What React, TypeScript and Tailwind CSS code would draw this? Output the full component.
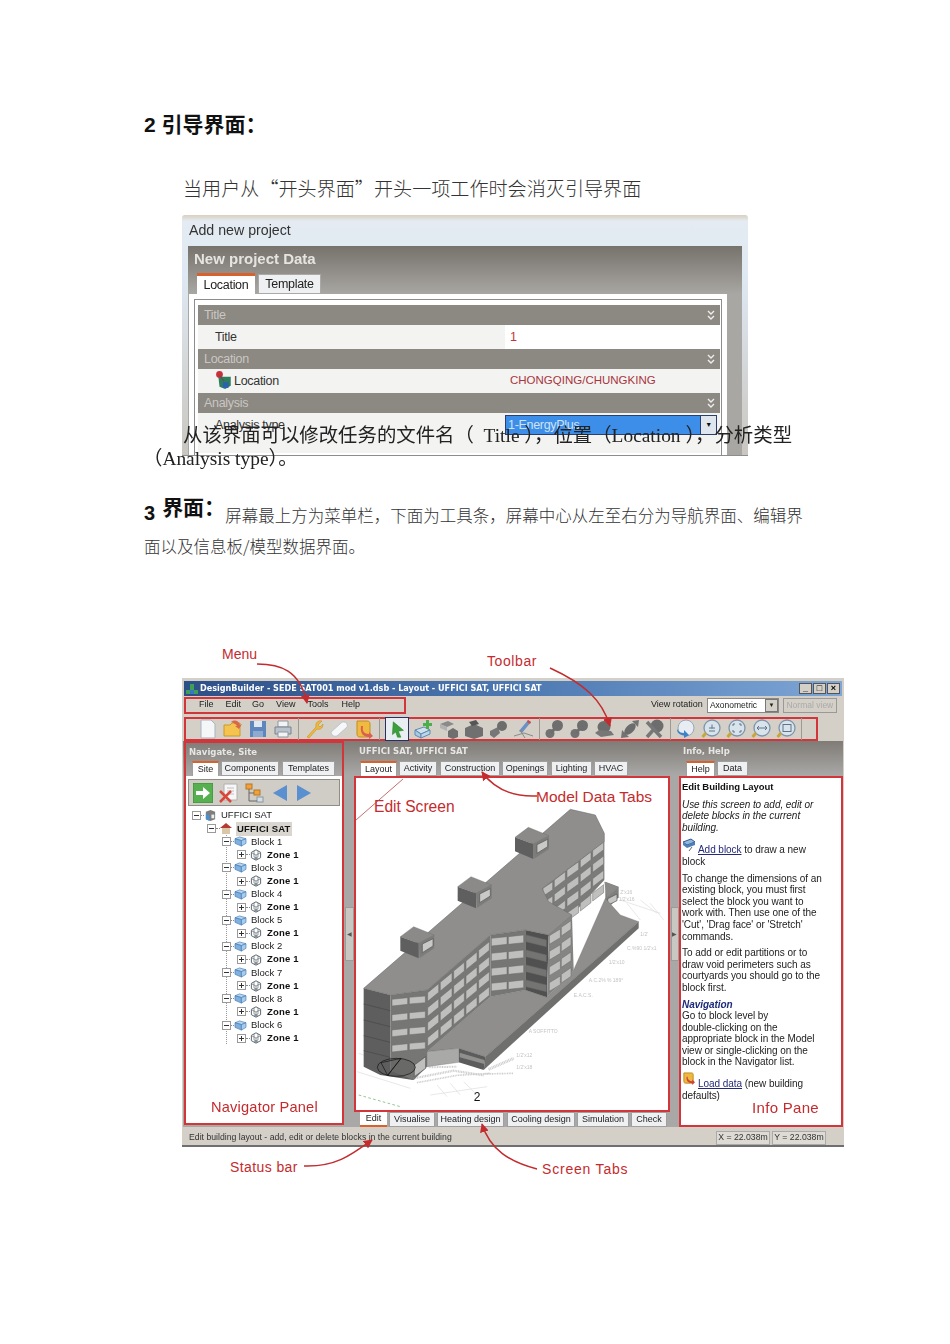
import type { ReactNode } from "react";

const serif = "font-['Liberation_Serif','Noto_Sans_CJK_SC',serif]";
const arial = "font-['Liberation_Sans',sans-serif]";

/* ---------- small icons ---------- */
const Ico = ({ children, className = "" }: { children: ReactNode; className?: string }) => (
  <svg viewBox="0 0 20 20" className={"w-5 h-5 shrink-0 " + className}>{children}</svg>
);

const Ball = () => (
  <Ico>
    <circle cx="12.5" cy="6.5" r="5.5" fill="#6e6e6e" />
    <circle cx="5" cy="14.5" r="4.5" fill="#727272" />
    <path d="M6 14 L12 7" stroke="#6e6e6e" strokeWidth="3" />
  </Ico>
);

const Zoom = ({ children }: { children: ReactNode }) => (
  <Ico>
    <circle cx="11" cy="9" r="8" fill="#d8e3ec" stroke="#7f94a8" strokeWidth="1.3" />
    <path d="M5 14 L1.5 18" stroke="#c9a63a" strokeWidth="3" />
    {children}
  </Ico>
);

const ToolSep = () => <div className="w-px h-[22px] bg-[#9d9a93] shrink-0" />;

const MainToolbar = () => (
  <div className="flex items-center gap-[5px] pl-[12px] h-full">
    <Ico><path d="M3 1h10l4 4v14H3z" fill="#f4f6f8" stroke="#a9b4bf" /></Ico>
    <Ico><path d="M1 6h6l2-2h8v13H1z" fill="#f5c450" stroke="#c99a2a" /><path d="M8 3c4-3 8-1 9 3l2-1-3 5-4-3 2 0c-1-2-3-3-6-4z" fill="#d9684a" /></Ico>
    <Ico><path d="M2 2h16v16H2z" fill="#5f86bd" /><path d="M6 2h8v6H6z" fill="#dfe8f2" /><path d="M5 12h10v6H5z" fill="#8eaad0" /></Ico>
    <Ico><path d="M5 2h10v6H5z" fill="#f3f3f3" stroke="#8e97a0" /><path d="M2 8h16v7H2z" fill="#b9c3cc" stroke="#77838f" /><path d="M5 13h10v5H5z" fill="#f3f3f3" stroke="#8e97a0" /></Ico>
    <ToolSep />
    <Ico><path d="M3 18 L12 8 C11 4 14 1 18 2 L14 6 L16 8 L19 5 C19 10 15 11 13 10 L5 19z" fill="#eeb83e" stroke="#c4922a" strokeWidth=".6" /></Ico>
    <Ico><path d="M2 13 L12 4 C14 2 17 3 18 5 C19 7 18 8 17 9 L8 17 C5 18 2 16 2 13z" fill="#f5f7f9" stroke="#bcc4cc" /></Ico>
    <Ico><path d="M3 2h10c2 0 3 1 3 3v13H6c-2 0-3-1-3-3z" fill="#f0b93f" stroke="#c48d22" /><path d="M9 7c-1 5 1 8 6 8l0-2 4 4-4 3 0-2c-6 0-9-4-8-11z" fill="#d9604f" /></Ico>
    <ToolSep />
    <div className="w-6 h-6 border border-[#2c2f66] bg-[#e9eef2] flex items-center justify-center shrink-0">
      <Ico className="!w-[17px] !h-[17px]"><path d="M5 1 L17 11 L11 12 L14 19 L10 19 L8 13 L4 16z" fill="#3ba03b" stroke="#1f7a1f" strokeWidth=".6" /></Ico>
    </div>
    <Ico><path d="M1 11l9-3 6 3-9 4z" fill="#cfe0ee" stroke="#5f8bb0" /><path d="M1 11v5l6 3v-4z" fill="#a9c8e2" stroke="#5f8bb0" /><path d="M7 15v4l9-4v-4z" fill="#bcd6ea" stroke="#5f8bb0" /><path d="M12 1h3v3h3v3h-3v3h-3V7H9V4h3z" fill="#4caf4c" /></Ico>
    <Ico><path d="M1 5l8-3 6 3-7 3z" fill="#8a8a8a" /><path d="M1 5v4l7 3V8z" fill="#b2b2b2" /><path d="M9 12l5-3 5 3v6l-5 2-5-2z" fill="#6f6f6f" /></Ico>
    <Ico><path d="M1 9l9-4 9 4v8l-9 3-9-3z" fill="#707070" /><path d="M5 3l7-2 3 4-7 2z" fill="#565656" /></Ico>
    <Ico><path d="M1 12l8-4 2 6-6 5-4-3z" fill="#777" /><circle cx="13" cy="7" r="5" fill="#6d6d6d" /></Ico>
    <Ico><path d="M14 1l3 2-9 11-3-2z" fill="#6d8fc4" /><path d="M0 17 L10 14 L19 17 M6 11 L11 19" stroke="#8a8a86" fill="none" /><path d="M14 1l3 2-1 2-3-2z" fill="#d24a3c" /></Ico>
    <ToolSep />
    <Ball />
    <Ball />
    <Ico><ellipse cx="9" cy="8" rx="6.5" ry="6" fill="#6c6c6c" /><path d="M0 14l4-3 12 1 3 4-13 2z" fill="#777" /></Ico>
    <Ico><path d="M1 19 L2 11 L9 18z M12 2 L19 1 L18 8z" fill="#737373" /><ellipse cx="10" cy="10" rx="7" ry="4" transform="rotate(-45 10 10)" fill="#6c6c6c" /></Ico>
    <Ico><circle cx="12" cy="7" r="6.5" fill="#6d6d6d" /><path d="M2 3 L16 18 M2 18 L10 9" stroke="#777" strokeWidth="3.5" /></Ico>
    <ToolSep />
    <Ico><circle cx="10" cy="9" r="8" fill="#e7edf2" stroke="#9aa7b2" /><path d="M1 10c2 3 4 4 7 4v-3l5 5-5 3v-3c-4 0-7-2-7-6z" fill="#3c83c9" /></Ico>
    <Zoom><path d="M8 9h6M11 5.5v4M8 12h6" stroke="#5f7488" fill="none" /></Zoom>
    <Zoom><path d="M7 5h2M13 5h2M7 13h2M13 13h2M7 5v2M15 5v2M7 11v2M15 11v2" stroke="#5f7488" fill="none" /></Zoom>
    <Zoom><path d="M6 9h10M6 9l2-2M6 9l2 2M16 9l-2-2M16 9l-2 2" stroke="#5f7488" fill="none" /></Zoom>
    <Zoom><rect x="7" y="5.5" width="8" height="7" fill="none" stroke="#5f7488" /></Zoom>
    <ToolSep />
  </div>
);

const BlockIco = () => (
  <svg viewBox="0 0 14 12" className="w-[13px] h-[11px] shrink-0">
    <path d="M1 3l5-2 7 2-5 2z" fill="#b8d4ee" stroke="#3f78b4" strokeWidth=".7" />
    <path d="M1 3v5l7 3V5z" fill="#7fb0de" stroke="#3f78b4" strokeWidth=".7" />
    <path d="M8 5v6l5-3V3z" fill="#a8ccec" stroke="#3f78b4" strokeWidth=".7" />
  </svg>
);

const ZoneIco = () => (
  <svg viewBox="0 0 12 12" className="w-3 h-3 shrink-0" fill="none" stroke="#4f5a63" strokeWidth=".9">
    <path d="M6 .8l4.6 2.5v5.4L6 11.2 1.4 8.7V3.3z" />
    <path d="M2 4l4 2 4-2M6 6v5M4 2l0 6 4 2M8 2v6L4 10" strokeWidth=".6" />
  </svg>
);

const Expander = ({ plus }: { plus?: boolean }) => (
  <span className="relative w-[9px] h-[9px] border border-[#9a9a9a] bg-white shrink-0 flex items-center justify-center">
    <span className="w-[5px] h-px bg-[#333]" />
    {plus && <span className="absolute w-px h-[5px] bg-[#333]" />}
  </span>
);

const Dots = ({ className = "w-[3px]" }: { className?: string }) => (
  <span className={"border-t border-dotted border-[#888] shrink-0 " + className} />
);

const BlockNode = ({ n }: { n: number }) => (
  <>
    <div className="h-[13.1px] flex items-center -ml-[5px]">
      <Expander />
      <Dots />
      <BlockIco />
      <span className="ml-[4px] text-[9.5px] text-[#222]">Block {n}</span>
    </div>
    <div className="h-[13.1px] flex items-center ml-[10px]">
      <Expander plus />
      <Dots className="w-[4px]" />
      <ZoneIco />
      <span className="ml-[5px] text-[9.5px] font-bold text-[#111] tracking-[.2px]">Zone 1</span>
    </div>
  </>
);

const Tab = ({ label, active, className = "" }: { label: string; active?: boolean; className?: string }) => (
  <div
    className={
      "h-[15px] flex items-center justify-center text-[9px] text-[#222] border border-[#9f9f9f] " +
      (active ? "bg-white border-t-2 border-t-[#d8612c] border-b-0 " : "bg-[#eef0f2] ") +
      className
    }
  >
    {label}
  </div>
);

/* ---------- the 3D model ---------- */
type Win = [number, number, number, number];

const windowsOf = (list: Win[], h: number, floors: number, step: number, fill = "#bfbfbd") =>
  list.flatMap((w, i) =>
    Array.from({ length: floors }, (_, f) => {
      const d = f * step;
      return (
        <polygon
          key={i + "-" + f}
          points={`${w[0]},${w[1] + d} ${w[2]},${w[3] + d} ${w[2]},${w[3] + d + h} ${w[0]},${w[1] + d + h}`}
          fill={fill}
          stroke="#6a6a6a"
          strokeWidth="1.5"
        />
      );
    })
  );

const Dormer = ({ x, y }: { x: number; y: number }) => (
  <g transform={`translate(${x} ${y})`}>
    <polygon points="130,410 185,430 185,475 130,452" fill="#5f5f5f" />
    <polygon points="130,410 170,380 232,405 185,430" fill="#8b8a88" stroke="#666" />
    <polygon points="185,430 232,405 232,445 188,474" fill="#7c7c7a" />
    <polygon points="196,432 228,416 228,438 196,458" fill="#c9c9c7" stroke="#555" strokeWidth="2" />
  </g>
);

const Building = () => (
  <svg viewBox="0 0 930 930" className="w-[310px] h-[310px] block">
    <g stroke="#dcdcdc" fill="none" strokeWidth="2">
      <path d="M0 815l160 50 M5 760l150 50 M220 885l170-25 M240 855l30 35 M280 850l30 35 M320 845l35 35" />
      <path d="M790 300l120 40 M810 310l40 50 M850 300l50 40 M880 310l40 50" />
    </g>
    <path d="M5 885 L130 920" stroke="#5fa85f" strokeWidth="2" strokeDasharray="8 7" fill="none" />

    {/* speckle of the site drawing around the base */}
    <g stroke="#cdcdcd" fill="none" strokeWidth="7" strokeDasharray="3 2">
      <path d="M170 835 L290 812 L380 826" />
      <path d="M180 848 L300 826 L400 820" strokeWidth="5" />
      <path d="M215 802 L300 800" strokeWidth="6" />
      <path d="M395 808 L470 775" strokeWidth="9" />
      <path d="M380 822 L470 820" strokeWidth="5" />
    </g>

    {/* upper block behind and small roof box */}
    <polygon points="745,245 785,260 785,292 755,322 745,300" fill="#7f7f7d" />
    <polygon points="752,296 780,282 780,302 752,316" fill="#c6c6c4" stroke="#555" strokeWidth="2" />
    <polygon points="742,245 785,262 750,292" fill="#8a8987" />

    {/* podium */}
    <polygon points="745,295 790,345 845,365 385,770 305,745 210,755 400,590 505,570 570,592 650,510" fill="#8f8e8c" stroke="#666" />
    <polygon points="845,365 845,385 380,810 385,770" fill="#6f6f6d" />
    <polygon points="305,745 385,770 380,810 305,787" fill="#5c5c5c" />
    <polygon points="308,758 382,780 382,792 308,772" fill="#8f8f8d" />
    <polygon points="210,755 305,745 305,787 210,800" fill="#a9a9a7" stroke="#666" />

    {/* upper facade */}
    <polygon points="555,265 742,125 742,240 645,345 575,325" fill="#7b7b79" />
    {windowsOf(
      [
        [558, 265, 587, 245],
        [592, 240, 625, 215],
        [630, 210, 665, 185],
        [670, 180, 702, 155],
        [707, 150, 740, 125],
      ],
      24, 4, 43
    )}

    {/* facades */}
    <polygon points="20,565 100,585 100,812 172,825 168,840 70,825 20,800" fill="#5e5e5e" />
    <path d="M20 612l80 20M20 660l80 20M20 707l80 20M20 752l80 20" stroke="#474747" strokeWidth="2" />
    <polygon points="100,585 210,570 210,800 170,840 100,812" fill="#767674" />
    <polygon points="210,570 400,405 400,590 210,755" fill="#777775" />
    <polygon points="400,405 505,390 505,570 400,590" fill="#767674" />
    <polygon points="505,390 575,405 570,592 505,570" fill="#505050" />
    <polygon points="575,405 645,345 650,510 570,592" fill="#858583" />
    {windowsOf([[105, 598, 152, 593], [157, 592, 205, 588]], 20, 4, 46)}
    <polygon points="172,795 206,770 206,805 172,830" fill="#bfbfbd" stroke="#555" strokeWidth="2" />
    {windowsOf(
      [
        [212, 578, 245, 551],
        [250, 547, 285, 518],
        [290, 513, 322, 487],
        [327, 483, 360, 456],
        [365, 451, 397, 425],
      ],
      26, 4, 45
    )}
    {windowsOf([[403, 415, 450, 410], [454, 410, 500, 405]], 23, 4, 45)}
    {windowsOf([[507, 405, 568, 420]], 20, 4, 45, "#747472")}
    {windowsOf([[577, 407, 610, 387], [613, 382, 642, 362]], 26, 4, 47)}

    {/* roof */}
    <polygon
      points="20,565 640,28 715,45 742,100 742,125 555,265 575,305 645,345 575,405 505,390 400,405 210,570 100,585"
      fill="#8f8e8c"
      stroke="#666"
      strokeWidth="1.5"
    />
    <Dormer x={0} y={0} />
    <Dormer x={172} y={-150} />
    <Dormer x={344} y={-298} />

    {/* north arrow */}
    <ellipse cx="118" cy="802" rx="57" ry="27" fill="#5e5e5e" fillOpacity=".55" stroke="#111" strokeWidth="2" />
    <path d="M72 788 L132 775 L92 826z M132 775 L92 826" fill="none" stroke="#111" strokeWidth="2" />

    {/* drawing labels */}
    <g fill="#c4c4c4" fontFamily="Liberation Sans, sans-serif" fontSize="15">
      <text x="790" y="283">Z'x16</text>
      <text x="785" y="303">1/2'x16</text>
      <text x="850" y="408">1/2'</text>
      <text x="810" y="450">C.%90 1/2'x1</text>
      <text x="755" y="492">1/2'x10</text>
      <text x="695" y="547">A.C.2% % 189°</text>
      <text x="650" y="590">E.A.C.S.</text>
      <text x="515" y="700">A SOFFITTO</text>
      <text x="478" y="772">1/2'x12</text>
      <text x="478" y="808">1/2'x18</text>
    </g>
    <text x="350" y="902" fontFamily="Liberation Sans, sans-serif" fontSize="36" fill="#111">2</text>
  </svg>
);

const Note = ({ className, children }: { className: string; children: ReactNode }) => (
  <div className={"absolute text-[#c42b2e] leading-none whitespace-nowrap " + arial + " " + className}>{children}</div>
);

const Line = ({ children, className = "" }: { children: ReactNode; className?: string }) => (
  <div className={"h-[11.6px] leading-[11.6px] " + className}>{children}</div>
);

const SectionBar = ({ label }: { label: string }) => (
  <div className="h-5 bg-[#8c8882] flex items-center justify-between pl-[6px] pr-[5px] text-[12.5px] text-[#c9c7c3]">
    <span>{label}</span>
    <svg viewBox="0 0 8 10" className="w-2 h-[10px]" fill="none" stroke="#eee" strokeWidth="1.4">
      <path d="M1 1l3 3 3-3M1 6l3 3 3-3" />
    </svg>
  </div>
);

export default function App() {
  return (
    <div className="relative w-[950px] h-[1344px] overflow-hidden bg-white text-[#222]">
      <div className="pl-[144px] pt-[112px]">
        <h2 className="h-[26px] leading-[26px] text-[21px] font-bold text-[#111] font-['Liberation_Sans','Noto_Sans_CJK_SC',sans-serif]">
          2 引导界面：
        </h2>
        <p className="mt-[38px] ml-[39px] h-6 leading-6 text-[19.1px] text-[#333] font-['Noto_Sans_CJK_SC',sans-serif] font-light whitespace-nowrap">
          当用户从“开头界面”开头一项工作时会消灭引导界面
        </p>

        {/* Add new project dialog */}
        <div className={"mt-[15px] ml-[38px] w-[566px] h-[241px] rounded-t-[3px] overflow-hidden flex flex-col px-[6px] border-b border-[#8d8d8d] blur-[0.35px] bg-[linear-gradient(180deg,#d9cfbf_0px,#e4ebf2_6px,#dfe9f3_60px,#c9c6bf_100%)] " + arial}>
          <div className="h-[31px] shrink-0 flex items-center pl-[1px] pt-[1px] text-[14.2px] text-[#333]">Add new project</div>
          <div className="flex-1 min-h-0 flex flex-col bg-[linear-gradient(180deg,#76726c_0px,#a9a7a3_48px,#a9a7a3_100%)]">
            <div className="h-[27px] shrink-0 flex items-center pl-[6px] text-[15px] font-bold text-[#e6e4e0]">New project Data</div>
            <div className="flex h-[21px] shrink-0 items-end pl-[9px] gap-[3px] text-[12.5px] tracking-[-.3px]">
              <div className="w-[58px] h-[21px] bg-white border-t-[3px] border-[#d9612b] flex items-center justify-center">Location</div>
              <div className="w-[63px] h-5 bg-[#eef0f2] border border-[#a9a9a9] flex items-center justify-center">Template</div>
            </div>
            <div className="flex-1 min-h-0 w-[538px] ml-[1px] bg-white pt-[5px] px-[5px] overflow-hidden">
              <div className="h-full border-x border-t border-[#8d8d8d] pl-[3px] pr-[1px] pt-[5px] text-[12.5px] tracking-[-.3px] text-[#333]">
                <SectionBar label="Title" />
                <div className="h-[24px] flex bg-[#f3f3f1]">
                  <div className="w-[307px] pl-[17px] flex items-center">Title</div>
                  <div className="flex-1 bg-white flex items-center pl-[5px] text-[#c2353a]">1</div>
                </div>
                <SectionBar label="Location" />
                <div className="h-[24px] flex bg-[#f3f3f1]">
                  <div className="w-[312px] pl-[17px] flex items-center">
                    <svg viewBox="0 0 16 16" className="w-[18px] h-[18px] shrink-0 -mt-[2px]">
                      <path d="M3 5h11v8l-5 3-5-2z" fill="#2f7f5f" />
                      <path d="M7 10h5v5H7z" fill="#2a62b0" />
                      <circle cx="4" cy="3" r="3" fill="#c9303a" />
                      <path d="M4 4l4 5" stroke="#555" />
                    </svg>
                    <span className="ml-[1px]">Location</span>
                  </div>
                  <div className="flex-1 flex items-center text-[11.5px] tracking-[0] text-[#a8353e]">CHONGQING/CHUNGKING</div>
                </div>
                <SectionBar label="Analysis" />
                <div className="relative h-10 bg-[#f3f3f1] pl-[17px] pt-[3px]">
                  Analysis type
                  <div className="absolute left-[307px] top-[2px] w-[212px] h-5 flex border border-[#2a3f6b]">
                    <div className="flex-1 bg-[#3d8ee8] text-[#cfe2f6] pl-[2px] flex items-center">1-EnergyPlus</div>
                    <div className="w-4 bg-[#dfe6ee] flex items-center justify-center text-[7px] text-[#111] border-l border-[#2a3f6b]">▼</div>
                  </div>
                </div>
              </div>
            </div>
          </div>
        </div>

        {/* runs over the dialog */}
        <div className={"relative -mt-[32px] text-[19.4px] text-[#222] whitespace-nowrap " + serif}>
          <p className="ml-[39px] h-6 leading-6">从该界面可以修改任务的文件名（{"\u00a0\u00a0"}Title{"\u00a0"}），位置（Location{"\u00a0"}），分析类型</p>
          <p className="-ml-[1px] -mt-[1px] h-6 leading-6">（Analysis type）。</p>
        </div>

        <div className="mt-[24px] flex items-start whitespace-nowrap font-['Liberation_Sans','Noto_Sans_CJK_SC',sans-serif] h-[32px]">
          <span className="mt-[5px] text-[20px] leading-[26px] font-bold text-[#111]">3</span>
          <span className="ml-[7px] text-[21px] leading-[26px] font-bold text-[#111]">界面：</span>
          <span className="mt-[9px] text-[16.5px] leading-6 text-[#333] font-light">屏幕最上方为菜单栏，下面为工具条，屏幕中心从左至右分为导航界面、编辑界</span>
        </div>
        <p className="mt-[7px] h-6 leading-6 text-[16.5px] text-[#333] font-light font-['Noto_Sans_CJK_SC',sans-serif] whitespace-nowrap">
          面以及信息板/模型数据界面。
        </p>

        {/* DesignBuilder window */}
        <div className={"mt-[120px] ml-[38px] w-[662px] h-[469px] flex flex-col bg-[#d4d0c8] pt-[3px] px-[2px] border-b-2 border-[#6f6f6f] blur-[0.35px] " + arial}>
          <div className="h-[15px] shrink-0 flex items-center bg-[linear-gradient(90deg,#2d4f87,#4c78b1_50%,#7ea6d6)] pr-[2px]">
            <svg viewBox="0 0 14 12" className="w-[14px] h-3 shrink-0 ml-[1px]">
              <path d="M1 11V7h4V1h4v6h4v4z" fill="#3f9f57" />
              <path d="M5 7h4v4H5z" fill="#3577c6" />
            </svg>
            <span className="ml-[1px] text-[8.1px] font-bold text-white whitespace-nowrap font-['DejaVu_Sans',sans-serif]">
              DesignBuilder - SEDE SAT001 mod v1.dsb - Layout - UFFICI SAT, UFFICI SAT
            </span>
            <div className="ml-auto flex gap-px">
              {["_", "□", "×"].map((c) => (
                <div key={c} className="w-[13px] h-[11px] bg-[#d4d0c8] border border-[#555] text-[9px] leading-[9px] font-bold text-black text-center">{c}</div>
              ))}
            </div>
          </div>
          <div className="h-[18px] shrink-0 flex items-center text-[9px]">
            <div className="w-[222px] h-[17px] border-2 border-[#d2353a] flex items-center relative">
              <span className="ml-[13px]">File</span>
              <span className="ml-[12px]">Edit</span>
              <span className="ml-[11px]">Go</span>
              <span className="ml-[12px]">View</span>
              <span className="ml-[12px]">Tools</span>
              <span className="ml-[13px]">Help</span>
            </div>
            <span className="ml-[245px]">View rotation</span>
            <div className="ml-[4px] w-[72px] h-[15px] bg-white border border-[#888] flex items-center justify-between pl-[2px] text-[8.5px]">
              Axonometric
              <span className="w-[13px] h-[13px] bg-[#d4d0c8] border border-[#777] text-[6px] text-center leading-[11px]">▼</span>
            </div>
            <div className="ml-[4px] w-[54px] h-[15px] border border-[#999] text-[#aaa] flex items-center justify-center text-[8.5px]">Normal view</div>
          </div>
          <div className="h-[27px] shrink-0 pt-[3px]">
            <div className="w-[634px] h-6 border-2 border-[#d2353a]"><MainToolbar /></div>
          </div>

          <div className="flex-1 min-h-0 flex bg-[linear-gradient(180deg,#7f7b76_0px,#a9a8a6_34px,#a9a8a6_100%)] -mx-[1px]">
            {/* navigator */}
            <div className="w-[160px] h-[384px] shrink-0 border-2 border-[#d2353a] ml-[1px] flex flex-col">
              <div className="h-[18px] shrink-0 pl-[3px] flex items-center text-[8.5px] font-bold text-[#e6e6e4] font-['DejaVu_Sans',sans-serif]">Navigate, Site</div>
              <div className="h-[15px] shrink-0 flex pl-[6px] gap-[2px]">
                <Tab label="Site" active className="w-[27px]" />
                <Tab label="Components" className="w-[58px]" />
                <Tab label="Templates" className="w-[53px] ml-[1px]" />
              </div>
              <div className="flex-1 min-h-0 bg-white flex flex-col relative pt-[3px] px-[2px]">
                <div className="h-[27px] shrink-0 bg-[#cfcdc6] border border-[#8f8d86] flex items-center pl-[4px]">
                  <Ico><rect x="0" y="0" width="20" height="20" fill="#57b04f" stroke="#3c8a36" /><path d="M3 8h7V4l7 6-7 6v-4H3z" fill="#fff" /></Ico>
                  <Ico className="ml-[6px]"><path d="M5 1h13v16H5z" fill="#f7f7f7" stroke="#b0b0b0" /><path d="M8 5h7M8 8h7M8 11h7" stroke="#c0c0c0" /><path d="M1 8 L12 19 M12 8 L1 19" stroke="#d8483a" strokeWidth="2.5" /></Ico>
                  <Ico className="ml-[6px]"><rect x="1" y="1" width="6" height="5" fill="#f0a13c" stroke="#b97820" /><rect x="9" y="7" width="6" height="5" fill="#f0a13c" stroke="#b97820" /><rect x="12" y="14" width="6" height="5" fill="#d5dde5" stroke="#8a97a3" /><path d="M4 6v12h8M4 10h5" stroke="#666" fill="none" /></Ico>
                  <svg viewBox="0 0 14 16" className="ml-[8px] w-[14px] h-4 shrink-0"><path d="M14 0v16L0 8z" fill="#5a8fd0" /></svg>
                  <svg viewBox="0 0 14 16" className="ml-[10px] w-[14px] h-4 shrink-0"><path d="M0 0v16l14-8z" fill="#5a8fd0" /></svg>
                </div>
                <div className="pt-[3px] pl-[4px] text-[9.5px] text-[#222]">
                  <div className="h-[13.1px] flex items-center">
                    <Expander />
                    <Dots />
                    <svg viewBox="0 0 14 14" className="w-[13px] h-[13px] shrink-0"><path d="M2 3l5-2 5 2v8l-5 2-5-2z" fill="#7d7d7d" /><path d="M2 5l4 2v6l-4-2z" fill="#4a8fce" /><path d="M8 6h3v4H8z" fill="#eee" /></svg>
                    <span className="ml-[4px]">UFFICI SAT</span>
                  </div>
                  <div className="h-[13.1px] flex items-center ml-[15px]">
                    <Expander />
                    <Dots className="w-[4px]" />
                    <svg viewBox="0 0 12 12" className="w-[12px] h-[12px] shrink-0"><path d="M6 0l6 5H0z" fill="#b43a33" /><path d="M2 5h8v6H2z" fill="#d9c7a8" /></svg>
                    <span className="ml-[4px] px-[1px] bg-[#d8d6cf] font-bold text-[#111] tracking-[.2px]">UFFICI SAT</span>
                  </div>
                  <div className="ml-[34px] border-l border-dotted border-[#999] w-fit pr-[6px] h-[209px]">
                    {[1, 3, 4, 5, 2, 7, 8, 6].map((n) => (
                      <BlockNode key={n} n={n} />
                    ))}
                  </div>
                </div>
                <div className="absolute bottom-[8px] left-[25px] text-[14.6px] leading-none text-[#c42b2e] tracking-[.2px]">Navigator Panel</div>
              </div>
            </div>

            {/* edit screen */}
            <div className="flex-1 min-w-0 flex flex-col">
              <div className="h-5 shrink-0 pl-[15px] flex items-center text-[8.5px] font-bold text-[#e6e6e4] font-['DejaVu_Sans',sans-serif]">UFFICI SAT, UFFICI SAT</div>
              <div className="h-[15px] shrink-0 flex pl-[16px] gap-[2px]">
                <Tab label="Layout" active className="w-[37px]" />
                <Tab label="Activity" className="w-[38px]" />
                <Tab label="Construction" className="w-[60px] ml-[1px]" />
                <Tab label="Openings" className="w-[46px]" />
                <Tab label="Lighting" className="w-[41px] ml-[1px]" />
                <Tab label="HVAC" className="w-[34px]" />
              </div>
              <div className="flex-1 min-h-0 flex items-center">
                <div className="w-[9px] h-[54px] ml-[1px] -mt-[35px] bg-[#c9c7c2] border border-[#9b9b9b] text-[6px] text-[#555] flex items-center justify-center">◀</div>
                <div className="w-[316px] h-[336px] -mt-[16px] bg-white border-2 border-[#d2353a] overflow-hidden flex justify-center items-end shrink-0">
                  <Building />
                </div>
                <div className="w-[9px] h-[54px] ml-[1px] -mt-[35px] bg-[#c9c7c2] border border-[#9b9b9b] text-[6px] text-[#555] flex items-center justify-center">▶</div>
              </div>
              <div className="h-[15px] shrink-0 flex pl-[16px] gap-[2px] -mt-[15px]">
                <div className="w-[27px] h-[15px] bg-white border-b-2 border-[#d9612b] text-[9px] flex items-center justify-center">Edit</div>
                <Tab label="Visualise" className="w-[46px]" />
                <Tab label="Heating design" className="w-[67px]" />
                <Tab label="Cooling design" className="w-[68px] ml-[1px]" />
                <Tab label="Simulation" className="w-[52px]" />
                <Tab label="Check" className="w-[36px]" />
              </div>
            </div>

            {/* info pane */}
            <div className="w-[164px] shrink-0 flex flex-col">
              <div className="h-5 shrink-0 pl-[4px] flex items-center text-[8.5px] font-bold text-[#e6e6e4] font-['DejaVu_Sans',sans-serif]">Info, Help</div>
              <div className="h-[15px] shrink-0 flex pl-[7px] gap-[2px]">
                <Tab label="Help" active className="w-[29px]" />
                <Tab label="Data" className="w-[31px]" />
              </div>
              <div className="flex-1 min-h-0 bg-white border-2 border-[#d2353a] pl-[1px] pt-[3px] text-[10px] text-[#222] relative tracking-[-.05px]">
                <Line className="font-bold text-[9.5px] text-[#111]">Edit Building Layout</Line>
                <div className="mt-[6px] italic">
                  <Line>Use this screen to add, edit or</Line>
                  <Line>delete blocks in the current</Line>
                  <Line>building.</Line>
                </div>
                <div className="mt-[11px] relative">
                  <svg viewBox="0 0 14 14" className="absolute -top-[6px] left-0 w-[14px] h-[14px]">
                    <path d="M1 4l8-3 4 3-8 3z" fill="#8fb8df" stroke="#34578f" />
                    <path d="M1 4v3l4 3V7zM5 7v3l8-3V4z" fill="#4f7fb8" />
                    <path d="M7 13l3-4" stroke="#666" />
                  </svg>
                  <Line><span className="ml-[16px] text-[#252a78] underline">Add block</span> to draw a new</Line>
                  <Line>block</Line>
                </div>
                <div className="mt-[5px]">
                  <Line>To change the dimensions of an</Line>
                  <Line>existing block, you must first</Line>
                  <Line>select the block you want to</Line>
                  <Line>work with. Then use one of the</Line>
                  <Line>'Cut', 'Drag face' or 'Stretch'</Line>
                  <Line>commands.</Line>
                </div>
                <div className="mt-[5px]">
                  <Line>To add or edit partitions or to</Line>
                  <Line>draw void perimeters such as</Line>
                  <Line>courtyards you should go to the</Line>
                  <Line>block first.</Line>
                </div>
                <div className="mt-[5px]">
                  <Line className="font-bold italic text-[#1c2a7a]">Navigation</Line>
                  <Line>Go to block level by</Line>
                  <Line>double-clicking on the</Line>
                  <Line>appropriate block in the Model</Line>
                  <Line>view or single-clicking on the</Line>
                  <Line>block in the Navigator list.</Line>
                </div>
                <div className="mt-[10px] relative">
                  <svg viewBox="0 0 14 14" className="absolute -top-[6px] left-0 w-[13px] h-[13px]">
                    <path d="M2 1h8c2 0 2 1 2 2v9H4c-2 0-2-1-2-2z" fill="#efb83e" stroke="#b98a22" />
                    <path d="M6 5c0 3 2 5 5 5v-2l3 3-3 3v-2c-4 0-7-3-6-7z" fill="#d0433a" />
                  </svg>
                  <Line><span className="ml-[16px] text-[#252a78] underline">Load data</span> (new building</Line>
                  <Line>defaults)</Line>
                </div>
                <div className="absolute bottom-[10px] right-[22px] text-[15px] leading-none text-[#c42b2e] tracking-[.3px]">Info Pane</div>
              </div>
            </div>
          </div>

          <div className="h-[18px] shrink-0 flex items-center pt-[3px] text-[8.7px] text-[#333] -mx-[1px]">
            <span className="ml-[6px]">Edit building layout - add, edit or delete blocks in the current building</span>
            <div className="ml-auto flex gap-[2px] mr-[17px]">
              <div className="w-[54px] h-[14px] bg-[#dedbd4] border border-[#aaa] flex items-center justify-center">X = 22.038m</div>
              <div className="w-[54px] h-[14px] bg-[#dedbd4] border border-[#aaa] flex items-center justify-center">Y = 22.038m</div>
            </div>
          </div>
        </div>
      </div>

      {/* call-outs on the window */}
      <Note className="left-[222px] top-[647px] text-[14px]">Menu</Note>
      <Note className="left-[487px] top-[654px] text-[14px] tracking-[.6px]">Toolbar</Note>
      <Note className="left-[374px] top-[799px] text-[15.6px]">Edit Screen</Note>
      <Note className="left-[536px] top-[789px] text-[15.5px]">Model Data Tabs</Note>
      <Note className="left-[230px] top-[1160px] text-[14px] tracking-[.4px]">Status bar</Note>
      <Note className="left-[542px] top-[1162px] text-[14px] tracking-[.8px]">Screen Tabs</Note>
      <svg viewBox="0 0 950 1344" className="absolute inset-0 w-[950px] h-[1344px] pointer-events-none" fill="none" stroke="#c42b2e" strokeWidth="1.5">
        <defs>
          <marker id="head" viewBox="0 0 10 10" refX="9" refY="5" markerWidth="6" markerHeight="6" orient="auto-start-reverse">
            <path d="M0 0 L10 5 L0 10z" fill="#c42b2e" stroke="none" />
          </marker>
        </defs>
        <path d="M257 664 C280 664 300 670 307 703" markerEnd="url(#head)" />
        <path d="M550 668 C585 684 602 700 610 726" markerEnd="url(#head)" />
        <path d="M537 796 C515 797 495 790 482 772" markerEnd="url(#head)" />
        <path d="M304 1166 C335 1167 350 1156 372 1140" markerEnd="url(#head)" />
        <path d="M537 1169 C510 1162 490 1150 482 1124" markerEnd="url(#head)" />
        <path d="M356 820 L403 779" strokeWidth=".8" stroke="#b8484a" />
      </svg>
    </div>
  );
}
